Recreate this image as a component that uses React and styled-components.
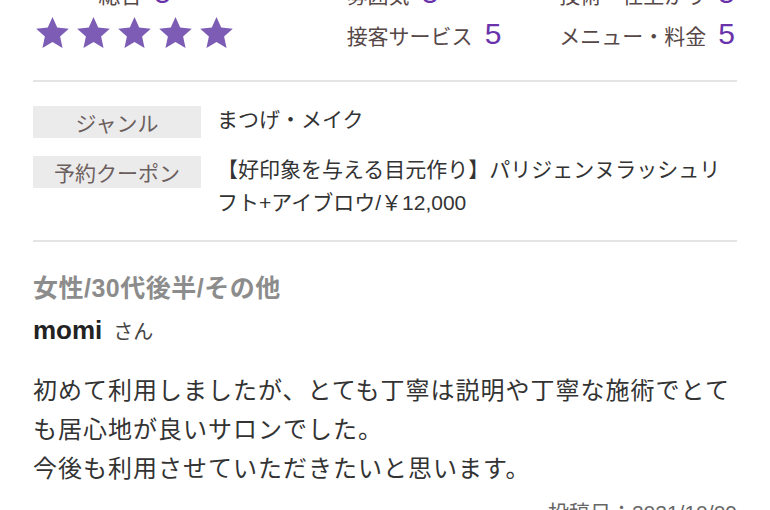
import React from 'react';
import styled, { createGlobalStyle } from 'styled-components';

const GlobalStyle = createGlobalStyle`
  html, body {
    margin: 0;
    padding: 0;
    overflow: hidden;
    background: #fff;
  }
  body {
    font-family: "Liberation Sans", "Noto Sans CJK JP", sans-serif;
    color: #333;
  }
`;

const scores = [
  { label: '雰囲気', value: 5 },
  { label: '技術・仕上がり', value: 5 },
  { label: '接客サービス', value: 5 },
  { label: 'メニュー・料金', value: 5 },
];

const details = [
  { label: 'ジャンル', value: 'まつげ・メイク' },
  { label: '予約クーポン', value: '【好印象を与える目元作り】パリジェンヌラッシュリフト+アイブロウ/￥12,000' },
];

const Star = () => (
  <svg width="37" height="35" viewBox="0 0 24 23">
    <polygon
      points="12,0.6 15.1,7.5 22.7,8.3 17,13.4 18.6,21 12,17.1 5.4,21 7,13.4 1.3,8.3 8.9,7.5"
      fill="#7c5cb4"
    />
  </svg>
);

const Review = () => {
  return (
    <Page>
      <GlobalStyle />
      <RatingHeader>
        <Overall>
          <OverallTitle>
            総合<Score>5</Score>
          </OverallTitle>
          <Stars>
            {[0, 1, 2, 3, 4].map((i) => (
              <Star key={i} />
            ))}
          </Stars>
        </Overall>
        <ScoreGrid>
          {scores.map((s) => (
            <ScoreItem key={s.label}>
              {s.label}
              <Score>{s.value}</Score>
            </ScoreItem>
          ))}
        </ScoreGrid>
      </RatingHeader>

      <Divider />

      <InfoTable>
        {details.map((d) => (
          <React.Fragment key={d.label}>
            <InfoLabel>{d.label}</InfoLabel>
            <InfoValue>{d.value}</InfoValue>
          </React.Fragment>
        ))}
      </InfoTable>

      <Divider />

      <Attributes>女性/30代後半/その他</Attributes>
      <Reviewer>
        <ReviewerName>momi</ReviewerName>
        <Honorific>さん</Honorific>
      </Reviewer>
      <Body>
        初めて利用しましたが、とても丁寧は説明や丁寧な施術でとても居心地が良いサロンでした。
        <br />
        今後も利用させていただきたいと思います。
      </Body>
      <PostedAt>投稿日：2021/10/09</PostedAt>
    </Page>
  );
};

export default function App() {
  return <Review />;
}

const Page = styled.div`
  padding: 0 33px;
`;

const RatingHeader = styled.div`
  display: flex;
  align-items: flex-start;
  margin: -25px 0 23px;
`;

const Overall = styled.div`
  display: flex;
  flex-direction: column;
  align-items: center;
  margin-left: 1px;
`;

const OverallTitle = styled.div`
  height: 41px;
  font-size: 22px;
  line-height: 41px;
  color: #574848;
`;

const Stars = styled.div`
  display: flex;
  gap: 4px;
  height: 35px;
`;

const ScoreGrid = styled.div`
  display: grid;
  grid-template-columns: auto auto;
  grid-auto-rows: 41px;
  column-gap: 58px;
  margin-left: auto;
  margin-right: 2px;
`;

const ScoreItem = styled.div`
  height: 41px;
  font-size: 21px;
  line-height: 41px;
  color: #574848;
  white-space: nowrap;
`;

const Score = styled.span`
  font-size: 30px;
  line-height: 1;
  color: #6a33ab;
  margin-left: 12px;
`;

const Divider = styled.div`
  height: 2px;
  background: #e4e4e4;
`;

const InfoTable = styled.div`
  display: grid;
  grid-template-columns: 168px 1fr;
  column-gap: 16px;
  row-gap: 18px;
  margin: 24px 0 21px;
`;

const InfoLabel = styled.div`
  height: 32px;
  background: #ebebeb;
  display: flex;
  align-items: center;
  justify-content: center;
  font-size: 21px;
  color: #6b5e5e;
`;

const InfoValue = styled.div`
  font-size: 21px;
  line-height: 33px;
  color: #333;
  margin-top: -3px;
`;

const Attributes = styled.div`
  margin-top: 28px;
  font-size: 25px;
  letter-spacing: 0.5px;
  line-height: 36px;
  font-weight: bold;
  color: #8c8c8c;
`;

const Reviewer = styled.div`
  margin-top: 4px;
  line-height: 40px;
`;

const ReviewerName = styled.span`
  font-size: 26px;
  font-weight: bold;
  color: #222;
`;

const Honorific = styled.span`
  font-size: 20px;
  color: #444;
  margin-left: 11px;
`;

const Body = styled.p`
  margin: 17px 0 0;
  font-size: 24px;
  letter-spacing: 1px;
  line-height: 39px;
  color: #333;
`;

const PostedAt = styled.div`
  margin-top: 9px;
  text-align: right;
  font-size: 21px;
  line-height: 32px;
  color: #666;
`;
